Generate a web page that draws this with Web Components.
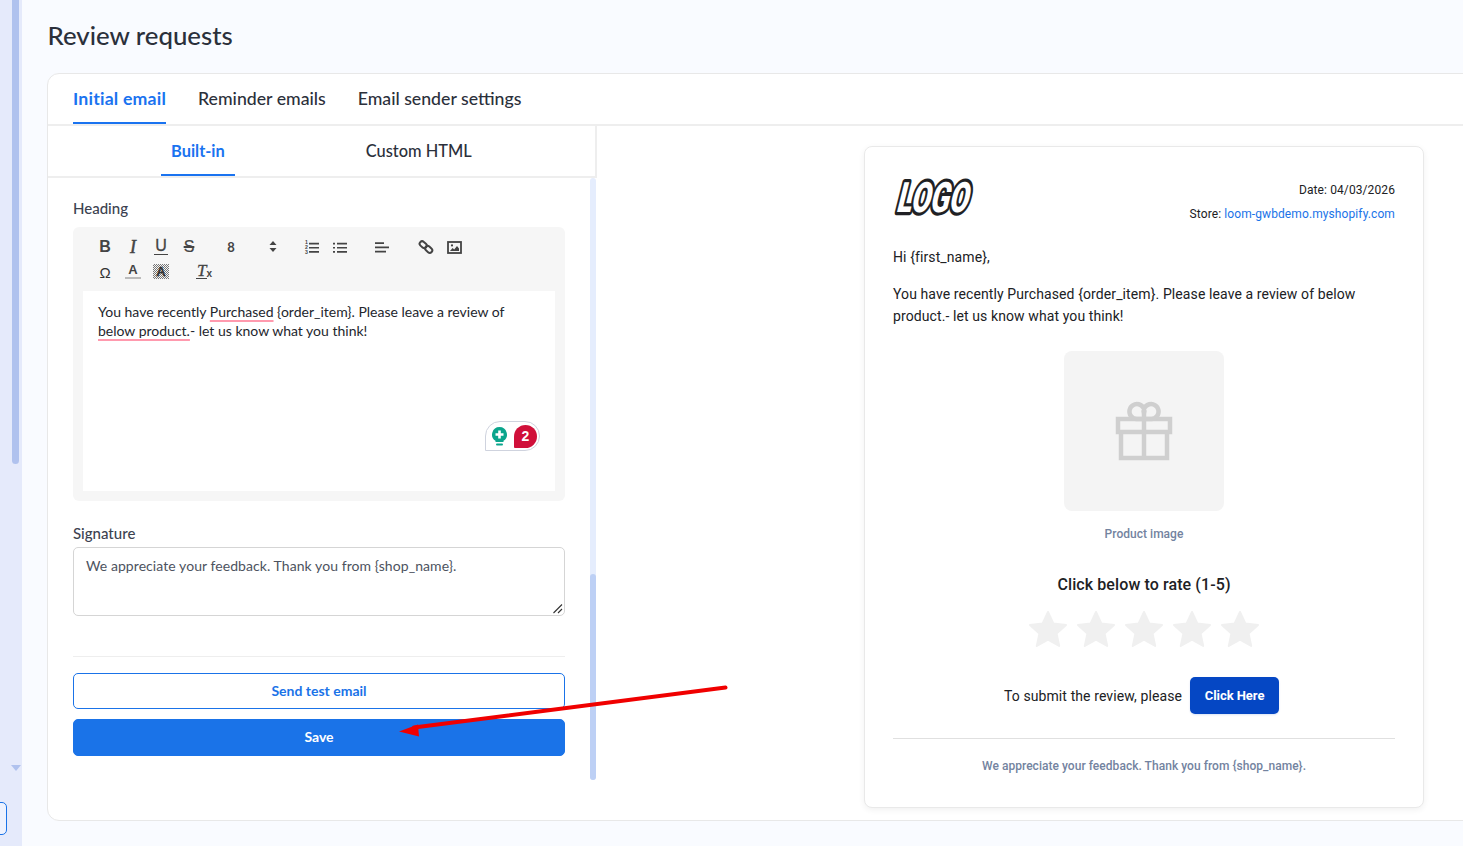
<!DOCTYPE html>
<html lang="en"><head><meta charset="utf-8"><title>Review requests</title>
<style>
html,body{margin:0;padding:0;width:1463px;height:846px;overflow:hidden;background:#f9fbff;font-family:Lato,"Noto Sans",sans-serif;color:#2b303b}
</style></head><body>
<review-page></review-page>
<script>
function def(name,html,init){customElements.define(name,class extends HTMLElement{constructor(){super();const r=this.attachShadow({mode:'open'});r.innerHTML=html;if(init)init(r,this)}})}

def('side-rail',`<style>
:host{display:flex;flex-direction:column;width:22px;height:846px;background:#e5eafb;flex:none;overflow:hidden}
.thumb{width:7px;height:464px;margin-left:12px;background:#b0c2ee;border-radius:0 0 4px 4px}
.tri{width:0;height:0;margin:301px 0 0 11px;border:5px solid transparent;border-top:6px solid #b0c2ee;border-bottom:0}
.box{width:15px;height:31px;margin:31px 0 0 -10px;border:1px solid #1a73e8;border-radius:5px;background:#eef2fe}
</style><div class="thumb"></div><div class="tri"></div><div class="box"></div>`);

def('tab-item',`<style>
:host{display:flex;align-items:center;justify-content:center;box-sizing:border-box;height:100%;font-size:var(--tab-size,17.7px);font-weight:500;color:#2b303b;border-bottom:2px solid transparent;white-space:nowrap}
:host([active]){color:#1a73f0;border-bottom-color:#1a73f0;font-weight:700;letter-spacing:var(--active-ls,.2px)}
</style><slot></slot>`);

def('top-tabs',`<style>
:host{display:flex;gap:32px;height:52px;box-sizing:border-box;padding-left:25px;border-bottom:2px solid #eeeeee;flex:none}
</style><slot></slot>`);

def('sub-tabs',`<style>
:host{display:flex;height:52px;box-sizing:border-box;border-bottom:2px solid #eeeeee;border-right:2px solid #eeeeee;flex:none;padding-left:113px;--tab-size:16.4px;--active-ls:0}
::slotted(tab-item){padding:0 10px}
::slotted(tab-item:last-child){margin-left:121px}
</style><slot></slot>`);

const ic={
ol:`<svg width="16" height="15" viewBox="0 0 16 15"><path d="M5 2.700h10v1.700H5zM5 6.900h10v1.700H5zM5 11h10v1.700H5z" fill="#444"/></svg>`,
ul:`<svg width="16" height="15" viewBox="0 0 16 15" fill="#444"><path d="M1 2.700h2v1.700H1zM1 6.900h2v1.700H1zM1 11h2v1.700H1zM5 2.700h10v1.700H5zM5 6.900h10v1.700H5zM5 11h10v1.700H5z"/></svg>`,
al:`<svg width="16" height="15" viewBox="0 0 16 15" fill="#444"><path d="M1 2.200h9v1.700H1zM1 6.500h14v1.700H1zM1 10.800h11v1.700H1z"/></svg>`,
link:`<svg width="16" height="16" viewBox="0 0 16 16" fill="none" stroke="#444" stroke-width="2"><rect x="1.300" y="3.200" width="7.800" height="5" rx="2.500" transform="rotate(42 5.200 5.700)"/><rect x="6.800" y="7.900" width="7.800" height="5" rx="2.500" transform="rotate(42 10.700 10.400)"/></svg>`,
img:`<svg width="15" height="13" viewBox="0 0 15 13"><rect x="1" y="1" width="13" height="11" fill="none" stroke="#444" stroke-width="1.800"/><path d="M3 10l2.600-3 1.600 1.500L10 5l2 2.600V10z" fill="#444"/><circle cx="5" cy="4.400" r="1.100" fill="#444"/></svg>`};

def('tool-btn',`<style>
:host{display:flex;align-items:center;justify-content:center;width:28px;height:24px;font:400 15px "Liberation Sans",sans-serif;color:#444;flex:none;position:relative}
</style><slot></slot>`);

def('rich-editor',`<style>
:host{display:block;box-sizing:border-box;height:274px;background:#f6f6f6;border-radius:6px;padding:8px 10px 10px;position:relative}
.bar{display:flex;flex-wrap:wrap;height:48px;padding:0 8px 0 8px}
.row{display:flex;width:100%;height:24px}
.gap{width:14px;flex:none}
.b{font-weight:700;font-size:16px}
.i{font:italic 400 18px "Liberation Serif",serif;-webkit-text-stroke:.5px #444}
.u{font-size:16px;-webkit-text-stroke:.3px #444}
.u span{display:block;line-height:14px;border-bottom:1.500px solid #444;padding:0 1px 1px}
.s{font-size:16px;-webkit-text-stroke:.2px #444}
.s span{text-decoration:line-through;text-decoration-thickness:1.500px;padding:0 1px}
.sel{display:flex;justify-content:space-between;align-items:center;width:70px;flex:none;font:700 13px Lato,sans-serif;color:#444}
.sel span{width:28px;text-align:center}
.num small{position:absolute;left:7px;top:4.500px;font:700 5.200px/5px "Liberation Sans",sans-serif;color:#444;white-space:pre}
.A{border-bottom:2px solid #bbb;font-weight:700;font-size:13px;line-height:13px;padding:0 3px 1px}
.H{font-weight:700;font-size:13px;line-height:15px;padding:0 3px;background:repeating-conic-gradient(#777 0 25%,#f6f6f6 0 50%) 0 0/2px 2px;color:#333;-webkit-text-stroke:.3px #333}
.tx{font:italic 400 17px "Liberation Serif",serif;-webkit-text-stroke:.3px #444;display:flex;align-items:flex-end}
.tx b{font:700 10px/10px "Liberation Sans",sans-serif;-webkit-text-stroke:0;margin-left:-1px}
.tx i{border-bottom:1.300px solid #444;line-height:14px;display:block;padding:0 1px}
.text{box-sizing:border-box;height:200px;background:#fff;padding:11px 15px;font-size:14px;line-height:19px;color:#23262d;margin-top:8px}
.sp{text-decoration:underline #ff9aae 2px;text-underline-offset:3px;text-decoration-skip-ink:none}
.gram{position:absolute;left:412px;top:194px;width:55px;height:30px;box-sizing:border-box;border:1px solid #cfd3de;border-radius:15px 15px 15px 0;background:#fff;display:flex;align-items:center;justify-content:space-between;padding:0 2px 0 5px}
.red{width:23px;height:23px;background:#d0103a;border-radius:12px 12px 12px 1px;color:#fff;font:700 14px/23px "Liberation Sans",sans-serif;text-align:center}
</style>
<div class="bar">
 <div class="row">
  <tool-btn class="b">B</tool-btn><tool-btn class="i">I</tool-btn><tool-btn class="u"><span>U</span></tool-btn><tool-btn class="s"><span>S</span></tool-btn>
  <div class="gap"></div>
  <div class="sel"><span>8</span><span><svg width="8" height="11" viewBox="0 0 8 11" fill="#444"><path d="M4 0l3.500 4H.500zM4 11L.500 7h7z"/></svg></span></div>
  <div class="gap" style="width:11px"></div>
  <tool-btn class="num"><small>1
2
3</small>${ic.ol}</tool-btn><tool-btn>${ic.ul}</tool-btn>
  <div class="gap"></div>
  <tool-btn>${ic.al}</tool-btn>
  <div class="gap" style="width:16px"></div>
  <tool-btn>${ic.link}</tool-btn><tool-btn>${ic.img}</tool-btn>
 </div>
 <div class="row">
  <tool-btn style="font-size:15px;color:#333;padding-top:3px;box-sizing:border-box">Ω</tool-btn><tool-btn><span class="A">A</span></tool-btn><tool-btn><span class="H">A</span></tool-btn>
  <div class="gap" style="width:15px"></div>
  <tool-btn><span class="tx"><i>T</i><b>x</b></span></tool-btn>
 </div>
</div>
<div class="text">You have recently <span class="sp">Purchased</span> {order_item}. Please leave a review of <span class="sp">below product.</span>- let us know what you think!</div>
<div class="gram">
 <svg width="17" height="19" viewBox="0 0 17 19"><path d="M8.500 0a7.500 7.500 0 0 1 4 13.800V15H4.500v-1.200A7.500 7.500 0 0 1 8.500 0z" fill="#0aa58c"/><path d="M7.200 3.500h2.600v2.700h2.700v2.600H9.800v2.700H7.200V8.800H4.500V6.200h2.700z" fill="#fff"/><rect x="5" y="16.500" width="7" height="2" rx="1" fill="#0aa58c"/></svg>
 <div class="red">2</div>
</div>`);

def('field-label',`<style>:host{display:block;font-size:15px;line-height:18px;font-weight:500;color:#3c4250}</style><slot></slot>`);

def('sig-box',`<style>
:host{display:block;box-sizing:border-box;height:69px;border:1px solid #d5d5d5;border-radius:5px;background:#fff;padding:9px 12px;font-size:14px;line-height:18px;letter-spacing:.07px;color:#4d5360;position:relative}
svg{position:absolute;right:1px;bottom:1px}
</style><slot></slot><svg width="11" height="11" viewBox="0 0 11 11" stroke="#333" stroke-width="1.100"><path d="M1.500 10L10 1.500M6 10l4-4"/></svg>`);

def('ui-button',`<style>
:host{display:flex;align-items:center;justify-content:center;box-sizing:border-box;border-radius:5px;font-size:14px;font-weight:700;flex:none;border:1px solid #1a73e8;height:36px;color:#1a73e8;background:#fff;padding-bottom:2px}
:host([primary]){background:#1a73e8;color:#fff;height:37px}
</style><slot></slot>`);

def('left-panel',`<style>
:host{display:flex;flex-direction:column;width:549px;box-sizing:border-box;flex:none;height:694px}
.scroll{flex:1;display:flex;min-height:0}
.content{width:492px;margin-left:25px;flex:none;display:flex;flex-direction:column;padding-top:21px}
.track{width:6px;height:602px;margin-left:25px;background:#e5edfd;border-radius:3px;display:flex;flex-direction:column;justify-content:flex-end}
.track i{display:block;height:206px;background:#bdd0f5;border-radius:3px}
.hr{height:1px;background:#eeeeee;margin:40px 0 16px}
.s{margin:23px 0 5px}.e{margin-top:10px}
.save{margin-top:10px}
</style>
<slot name="tabs"></slot>
<div class="scroll"><div class="content">
 <field-label>Heading</field-label><div class="e"><rich-editor></rich-editor></div>
 <field-label class="s">Signature</field-label>
 <sig-box>We appreciate your feedback. Thank you from {shop_name}.</sig-box>
 <div class="hr"></div>
 <ui-button>Send test email</ui-button>
 <ui-button primary class="save">Save</ui-button>
</div><div class="track"><i></i></div></div>`);

const star=`<svg width="40" height="38" viewBox="0 0 40 38"><path d="M20 2l5.300 11.500 12.700 1.500-9.400 8.600 2.600 12.400L20 29.600 8.800 36l2.600-12.400L2 15l12.700-1.500z" fill="#f0f0f0" stroke="#f0f0f0" stroke-width="2" stroke-linejoin="round"/></svg>`;

def('email-preview',`<style>
:host{display:flex;flex-direction:column;box-sizing:border-box;width:560px;height:662px;background:#fff;border:1px solid #e9e9e9;border-radius:8px;box-shadow:0 2px 6px rgba(0,0,0,.06);padding:31px 28px 0;font-family:Roboto,sans-serif;color:#202124;flex:none;letter-spacing:.1px}
.head{display:flex;justify-content:space-between;height:56px}
.logo{display:block;flex:none;overflow:visible}
.logo text{font:900 42px Roboto,sans-serif;fill:#fff;stroke:#202124;stroke-width:6.500px;stroke-linejoin:round;paint-order:stroke fill;letter-spacing:0}
.meta{text-align:right;font-size:12px;line-height:24px}
.meta a{color:#1a73e8}
p{margin:0;font-size:14px;line-height:22px}
.hi{margin-top:12px}.msg{margin-top:15px}
.ph{width:160px;height:160px;border-radius:8px;background:#f4f4f4;margin:24px auto 0;display:flex;align-items:center;justify-content:center}
.cap{text-align:center;font-size:12px;font-weight:500;color:#7383a0;line-height:16px;margin-top:15px;letter-spacing:.03px}
h3{margin:32px 0 0;text-align:center;font-size:16px;line-height:22px;font-weight:500}
.stars{display:flex;justify-content:center;gap:8px;margin-top:14px;height:40px}
.cta{display:flex;justify-content:center;align-items:center;gap:8px;margin-top:27px;font-size:14px;padding-right:5px}
.btn{width:89px;height:37px;background:#0547c4;color:#fff;border-radius:5px;display:flex;align-items:center;justify-content:center;font-size:13px;font-weight:700;letter-spacing:-.05px;box-shadow:0 1px 2px rgba(5,71,196,.15)}
.hr{height:1px;background:#e0e0e0;margin-top:24px}
.foot{text-align:center;font-size:12px;font-weight:500;color:#7383a0;line-height:16px;margin-top:19px;letter-spacing:.04px}
</style>
<div class="head"><svg class="logo" width="90" height="42" viewBox="0 0 90 42"><text transform="translate(2.500 34) skewX(-14) scale(.66 1)">LOGO</text></svg><div class="meta">Date: 04/03/2026<br>Store: <a>loom-gwbdemo.myshopify.com</a></div></div>
<p class="hi">Hi {first_name},</p>
<p class="msg">You have recently Purchased {order_item}. Please leave a review of below product.- let us know what you think!</p>
<div class="ph"><svg width="58" height="60" viewBox="0 0 58 60" fill="none" stroke="#cfcfcf" stroke-width="4.500"><rect x="3" y="18" width="52" height="13"/><path d="M6 31v26h46V31M29 18v39"/><path d="M29 18v-5a7.500 7.500 0 1 0-7.500 5zM29 18v-5a7.500 7.500 0 1 1 7.500 5z"/></svg></div>
<div class="cap">Product image</div>
<h3>Click below to rate (1-5)</h3>
<div class="stars">${star.repeat(5)}</div>
<div class="cta"><span>To submit the review, please</span><div class="btn">Click Here</div></div>
<div class="hr"></div>
<div class="foot">We appreciate your feedback. Thank you from {shop_name}.</div>`);

def('review-page',`<style>
:host{display:flex;width:1463px;height:846px;overflow:hidden;position:relative}
main{flex:1;min-width:0;padding-left:25px;display:flex;flex-direction:column}
h1{margin:0;height:73px;box-sizing:border-box;padding-top:19px;padding-left:.5px;font-size:25.800px;line-height:33px;font-weight:500;color:#2b303b}
.card{width:1500px;height:748px;box-sizing:border-box;background:#fff;border:1px solid #e8e8e8;border-radius:12px;display:flex;flex-direction:column;overflow:hidden}
.body{display:flex;flex:1;min-height:0}
.right{padding:20px 0 0 267px}
.arrow{position:absolute;left:390px;top:680px;pointer-events:none}
</style>
<side-rail></side-rail>
<main><h1>Review requests</h1>
<div class="card">
 <top-tabs><tab-item active>Initial email</tab-item><tab-item>Reminder emails</tab-item><tab-item>Email sender settings</tab-item></top-tabs>
 <div class="body">
  <left-panel><sub-tabs slot="tabs"><tab-item active>Built-in</tab-item><tab-item>Custom HTML</tab-item></sub-tabs></left-panel>
  <div class="right"><email-preview></email-preview></div>
 </div>
</div></main>
<svg class="arrow" width="345" height="60" viewBox="0 0 345 60"><path d="M335.500 7.500L24 47.500" stroke="#f00000" stroke-width="4" stroke-linecap="round"/><path d="M9 51.500L28 44.500l1 12z" fill="#f00000"/></svg>`);
</script>
</body></html>
